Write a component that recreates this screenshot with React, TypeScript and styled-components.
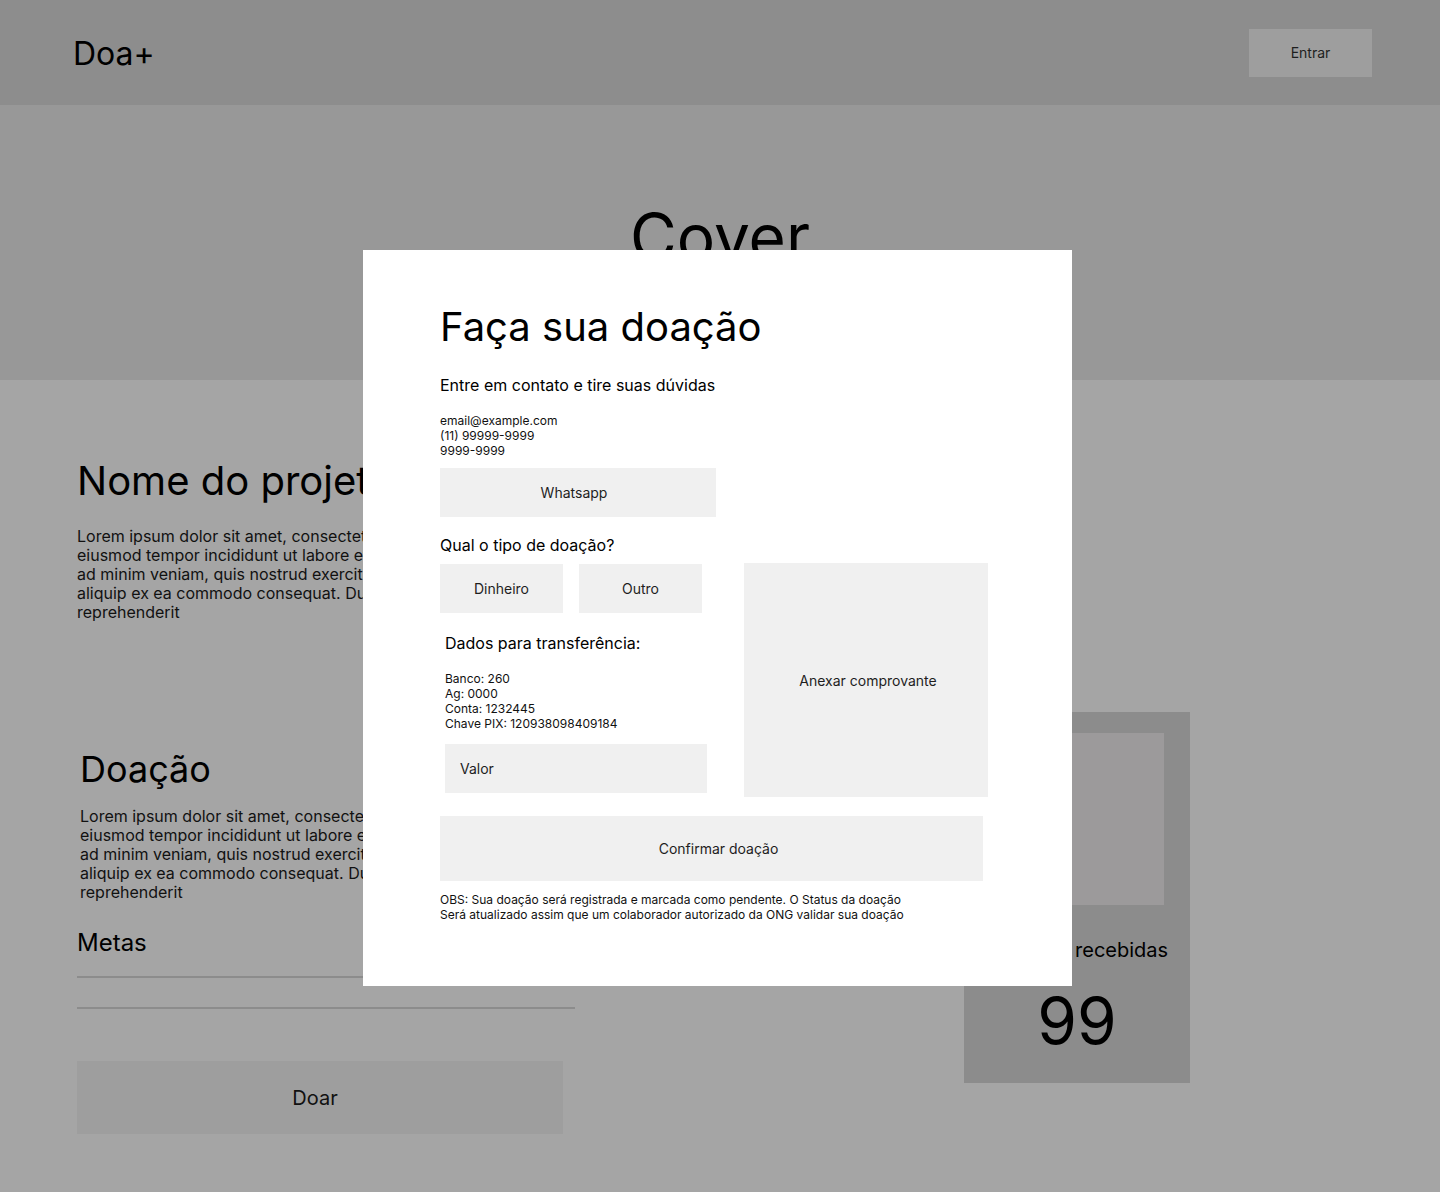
import styled, { createGlobalStyle } from "styled-components";

const GlobalStyle = createGlobalStyle`
  * {
    box-sizing: border-box;
  }
  body {
    margin: 0;
    font-family: "Inter", "Noto Sans", sans-serif;
    color: #000;
    background: #a5a5a5;
  }
`;

const Page = styled.div`
  position: relative;
  min-height: 1192px;
  background: #a5a5a5;
  overflow: hidden;
`;

const Header = styled.header`
  height: 105px;
  background: #8d8d8d;
  display: flex;
  align-items: center;
  justify-content: space-between;
  padding: 0 68px 0 73px;
`;

const Logo = styled.div`
  font-size: 32px;
  margin-top: 1px;
`;

const HeaderButton = styled.button`
  width: 123px;
  height: 48px;
  border: none;
  background: #9e9e9e;
  font-family: "Inter", sans-serif;
  font-size: 14px;
  color: #1e1e1e;
`;

const Cover = styled.section`
  height: 275px;
  background: #989898;
  display: flex;
  justify-content: center;
  padding-top: 100px;
  font-size: 64px;
  line-height: 1;
`;

const Main = styled.main`
  padding: 0 77px;
`;

const Intro = styled.section`
  padding-top: 77px;
`;

const Title = styled.h1`
  margin: 0;
  font-size: 40px;
  font-weight: 400;
  line-height: 48px;
`;

const Lorem = styled.p<{ $top: number; $left?: number }>`
  margin: ${(p) => p.$top}px 0 0 ${(p) => p.$left || 0}px;
  font-size: 16px;
  line-height: 19px;
  color: #111;
  white-space: nowrap;
`;

const Lower = styled.section`
  display: flex;
  align-items: flex-start;
  gap: 389px;
  margin-top: 90px;
`;

const DonationCol = styled.div`
  width: 498px;
  padding-top: 36px;
`;

const SubTitle = styled.h2`
  margin: 0 0 0 3px;
  font-size: 36px;
  font-weight: 400;
  line-height: 43px;
`;

const Metas = styled.h3`
  margin: 26px 0 0;
  font-size: 24px;
  font-weight: 400;
  line-height: 29px;
`;

const GoalLine = styled.div<{ $gap: number }>`
  height: 2px;
  background: #8c8c8c;
  margin-top: ${(p) => p.$gap}px;
`;

const DonateButton = styled.button`
  display: block;
  width: 486px;
  height: 73px;
  margin-top: 52px;
  padding: 0 10px 0 0;
  border: none;
  background: #9e9e9e;
  font-family: "Inter", sans-serif;
  font-size: 20px;
  color: #111;
`;

const StatsCard = styled.aside`
  width: 226px;
  height: 371px;
  background: #8c8c8c;
  padding: 21px 26px 0;
  display: flex;
  flex-direction: column;
  align-items: center;
`;

const StatsImage = styled.div`
  width: 174px;
  height: 172px;
  background: #9c9a9b;
`;

const StatsLabel = styled.div`
  margin-top: 33px;
  font-size: 20px;
  line-height: 24px;
  white-space: nowrap;
`;

const StatsNumber = styled.div`
  margin-top: 20px;
  font-size: 64px;
  line-height: 77px;
`;

/* modal */

const Modal = styled.div`
  position: absolute;
  top: 250px;
  left: 363px;
  width: 709px;
  height: 736px;
  background: #fff;
  padding: 53px 0 0 77px;
`;

const ModalTitle = styled.h2`
  margin: 0;
  font-size: 40px;
  font-weight: 400;
  line-height: 48px;
`;

const ModalLead = styled.p`
  margin: 25px 0 0;
  font-size: 16px;
  line-height: 19px;
`;

const SmallLines = styled.p<{ $top: number }>`
  margin: ${(p) => p.$top}px 0 0;
  font-size: 12px;
  line-height: 15px;
  color: #111;
`;

const GrayButton = styled.button<{ $w: number; $h: number; $shift?: number }>`
  display: flex;
  align-items: center;
  justify-content: center;
  width: ${(p) => p.$w}px;
  height: ${(p) => p.$h}px;
  border: none;
  padding: 0;
  padding-left: ${(p) => Math.max(0, p.$shift || 0) * 2}px;
  padding-right: ${(p) => Math.max(0, -(p.$shift || 0)) * 2}px;
  background: #f0f0f0;
  font-family: "Inter", sans-serif;
  font-size: 14px;
  color: #1e1e1e;
`;

const WhatsButton = styled(GrayButton)`
  margin-top: 10px;
`;

const Question = styled.p`
  margin: 19px 0 0;
  font-size: 16px;
  line-height: 19px;
`;

const TypeArea = styled.div`
  display: flex;
  align-items: flex-start;
  gap: 37px;
  margin-top: 8px;
`;

const LeftCol = styled.div`
  width: 267px;
`;

const TypeRow = styled.div`
  display: flex;
  gap: 16px;
  margin-top: 1px;
`;

const Transfer = styled.div`
  padding-left: 5px;
`;

const TransferTitle = styled.p`
  margin: 21px 0 0;
  font-size: 16px;
  line-height: 19px;
`;

const ValueInput = styled.div`
  display: flex;
  align-items: center;
  width: 262px;
  height: 49px;
  margin-top: 13px;
  padding-left: 15px;
  background: #f0f0f0;
  font-size: 14px;
  color: #1e1e1e;
`;

const ConfirmButton = styled(GrayButton)`
  margin-top: 19px;
`;

const loremLines = [
  "Lorem ipsum dolor sit amet, consectetur adipiscing elit, sed do",
  "eiusmod tempor incididunt ut labore et dolore magna aliqua. Ut enim",
  "ad minim veniam, quis nostrud exercitation ullamco laboris nisi ut",
  "aliquip ex ea commodo consequat. Duis aute irure dolor in",
  "reprehenderit",
];

function LoremBlock({ top, left }: { top: number; left?: number }) {
  return (
    <Lorem $top={top} $left={left}>
      {loremLines.map((line, i) => (
        <span key={i}>
          {line}
          {i < loremLines.length - 1 && <br />}
        </span>
      ))}
    </Lorem>
  );
}

export default function App() {
  return (
    <Page>
      <GlobalStyle />
      <Header>
        <Logo>Doa+</Logo>
        <HeaderButton>Entrar</HeaderButton>
      </Header>
      <Cover>Cover</Cover>
      <Main>
        <Intro>
          <Title>Nome do projeto</Title>
          <LoremBlock top={22} />
        </Intro>
        <Lower>
          <DonationCol>
            <SubTitle>Doação</SubTitle>
            <LoremBlock top={16} left={3} />
            <Metas>Metas</Metas>
            <GoalLine $gap={19} />
            <GoalLine $gap={29} />
            <DonateButton>Doar</DonateButton>
          </DonationCol>
          <StatsCard>
            <StatsImage />
            <StatsLabel>Doações recebidas</StatsLabel>
            <StatsNumber>99</StatsNumber>
          </StatsCard>
        </Lower>
      </Main>

      <Modal>
        <ModalTitle>Faça sua doação</ModalTitle>
        <ModalLead>Entre em contato e tire suas dúvidas</ModalLead>
        <SmallLines $top={18}>
          email@example.com
          <br />
          (11) 99999-9999
          <br />
          9999-9999
        </SmallLines>
        <WhatsButton $w={276} $h={49} $shift={-4}>
          Whatsapp
        </WhatsButton>
        <Question>Qual o tipo de doação?</Question>
        <TypeArea>
          <LeftCol>
            <TypeRow>
              <GrayButton $w={123} $h={49}>
                Dinheiro
              </GrayButton>
              <GrayButton $w={123} $h={49}>
                Outro
              </GrayButton>
            </TypeRow>
            <Transfer>
              <TransferTitle>Dados para transferência:</TransferTitle>
              <SmallLines $top={18}>
                Banco: 260
                <br />
                Ag: 0000
                <br />
                Conta: 1232445
                <br />
                Chave PIX: 120938098409184
              </SmallLines>
              <ValueInput>Valor</ValueInput>
            </Transfer>
          </LeftCol>
          <GrayButton $w={244} $h={234} $shift={2}>
            Anexar comprovante
          </GrayButton>
        </TypeArea>
        <ConfirmButton $w={543} $h={65} $shift={7}>
          Confirmar doação
        </ConfirmButton>
        <SmallLines $top={11}>
          OBS: Sua doação será registrada e marcada como pendente. O Status da
          doação
          <br />
          Será atualizado assim que um colaborador autorizado da ONG validar sua
          doação
        </SmallLines>
      </Modal>
    </Page>
  );
}
